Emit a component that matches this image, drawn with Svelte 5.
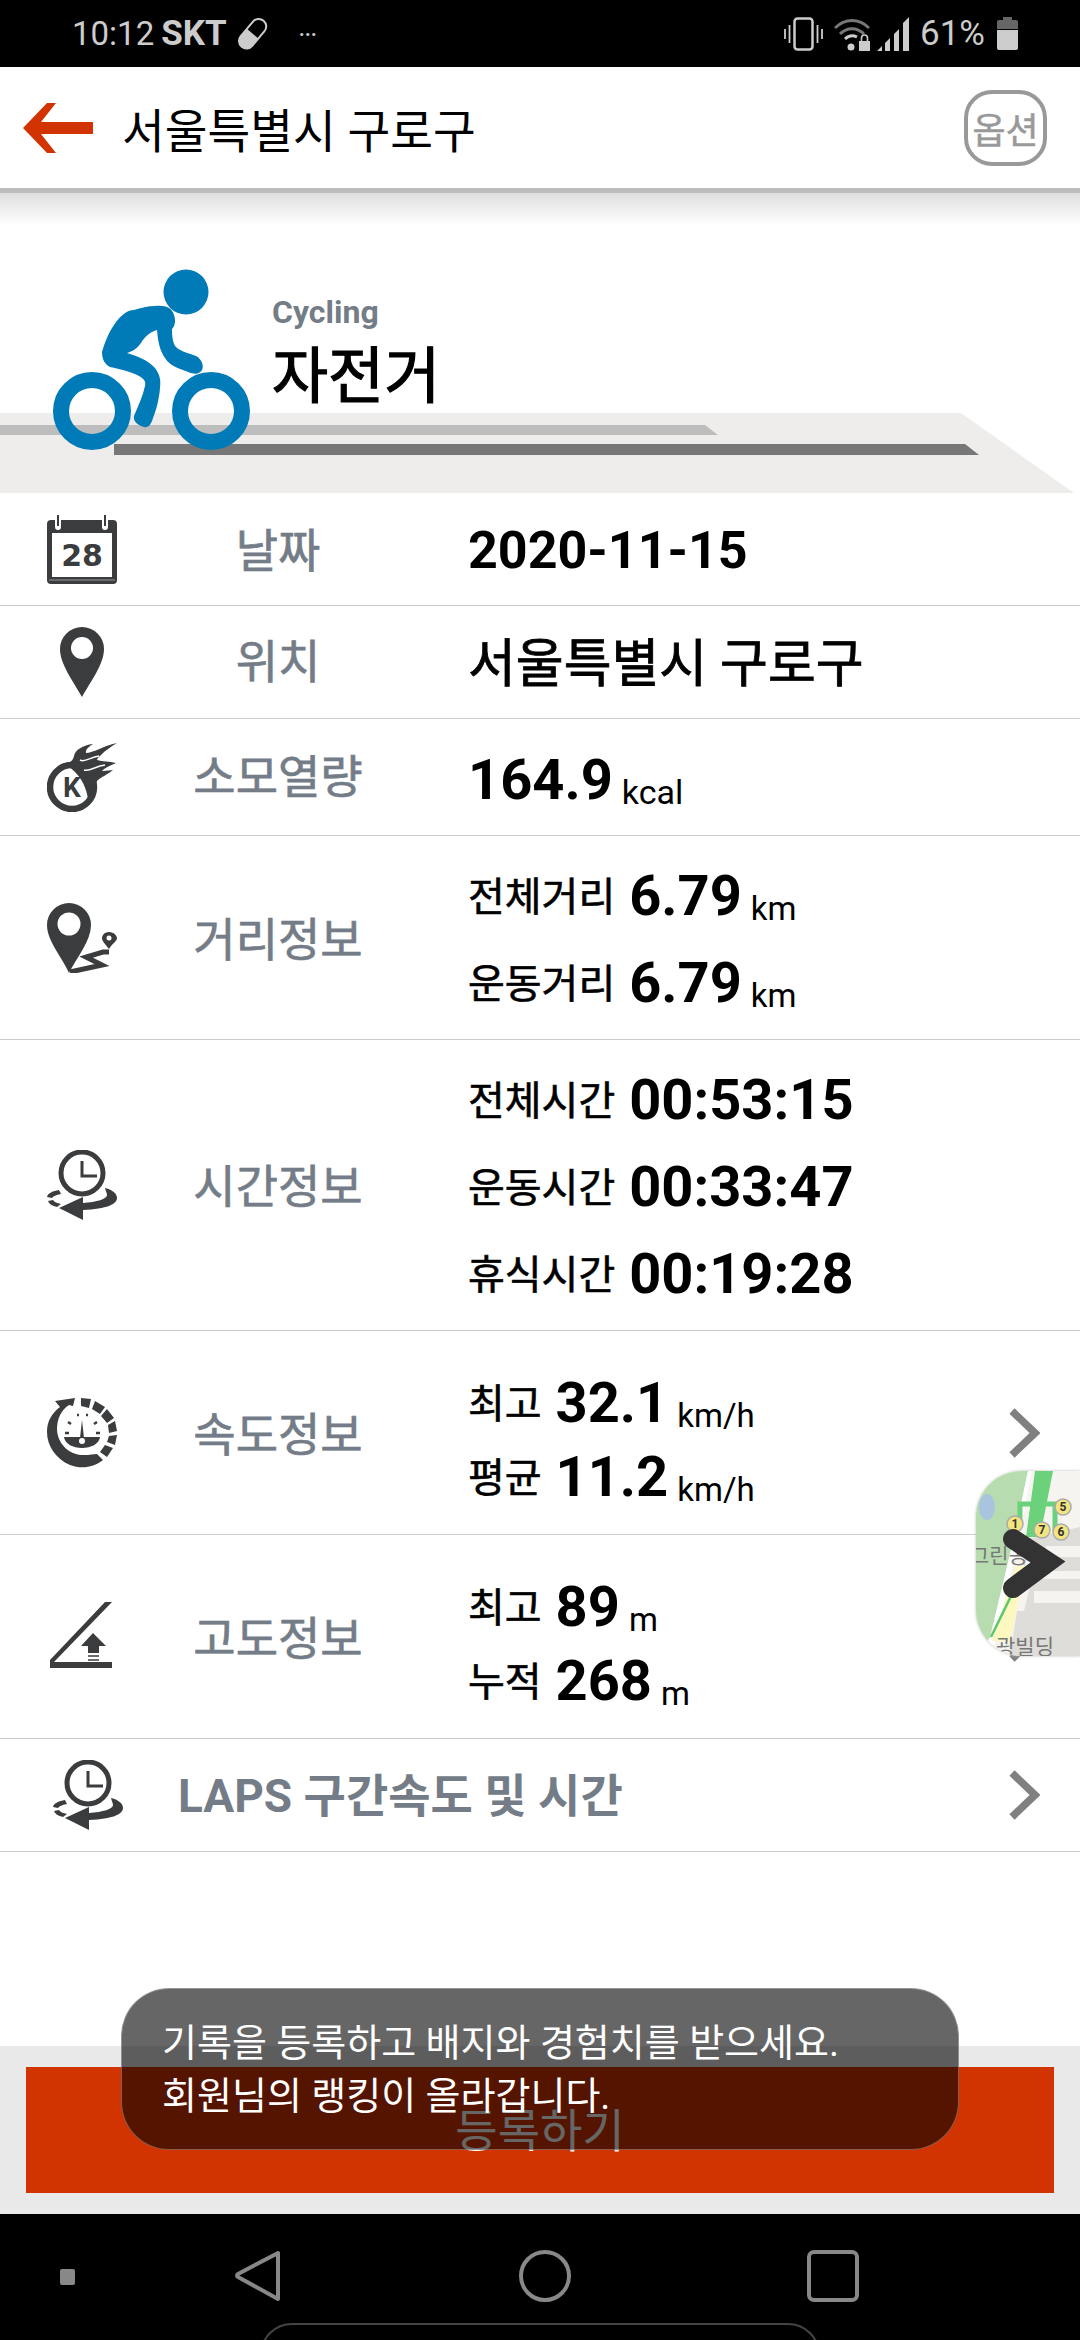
<script>
    const detailRows = [
        {
            label: '거리정보', icon: 'distance', cls: 'h203 gap87',
            lines: [
                { name: '전체거리', value: '6.79', unit: 'km' },
                { name: '운동거리', value: '6.79', unit: 'km' }
            ]
        },
        {
            label: '시간정보', icon: 'time', cls: 'h290 gap87',
            lines: [
                { name: '전체시간', value: '00:53:15' },
                { name: '운동시간', value: '00:33:47' },
                { name: '휴식시간', value: '00:19:28' }
            ]
        },
        {
            label: '속도정보', icon: 'speed', cls: 'h203 gap74', more: true,
            lines: [
                { name: '최고', value: '32.1', unit: 'km/h' },
                { name: '평균', value: '11.2', unit: 'km/h' }
            ]
        },
        {
            label: '고도정보', icon: 'height', cls: 'h203 gap74', more: true,
            lines: [
                { name: '최고', value: '89', unit: 'm' },
                { name: '누적', value: '268', unit: 'm' }
            ]
        }
    ];
</script>

{#snippet clock()}
    <svg class="icon" viewBox="0 0 70 70">
        <circle cx="35" cy="23" r="21" fill="none" stroke="#3a3c3e" stroke-width="5" />
        <path d="M35 11V26H50" fill="none" stroke="#3a3c3e" stroke-width="3" />
        <path d="M58 38C66 40 70 44 70 48C70 54 60 59 36 60L36 70L12 58L36 47V53C50 52 60 49 60 45C60 43 59 42 58 38Z" fill="#3a3c3e" />
        <path d="M0 47C1 43 6 41 12 40L14 44C9 45 6 46 5 48ZM1 51L6 50C7 52 10 53 14 54L10 57C5 56 2 54 1 51Z" fill="#3a3c3e" />
    </svg>
{/snippet}

{#snippet chevron()}
    <svg class="chevron" viewBox="0 0 34 50">
        <path d="M6 3L29 25L6 47" fill="none" stroke="#808080" stroke-width="7.500" />
    </svg>
{/snippet}

<div class="screen">
    <div class="statusbar">
        <div class="status-left">
            <span class="time">10:12</span>
            <b class="carrier">SKT</b>
            <svg class="pill" viewBox="0 0 34 34">
                <g transform="rotate(40 17 17)">
                    <rect x="9" y="0" width="15" height="34" rx="7.5" fill="none" stroke="#ccc" stroke-width="2" />
                    <path d="M9 17H24V26.5A7.5 7.5 0 0 1 9 26.5Z" fill="#ccc" />
                </g>
            </svg>
            <span class="dots">···</span>
        </div>
        <div class="status-right">
            <svg class="s-vibrate" viewBox="0 0 39 34">
                <rect x="10.500" y="1.500" width="18" height="31" rx="3" fill="none" stroke="#ccc" stroke-width="2.500" />
                <path d="M5.500 8V26M1 12V22M33.500 8V26M38 12V22" stroke="#ccc" stroke-width="1.800" />
            </svg>
            <svg class="s-wifi" viewBox="0 0 38 34">
                <path d="M2 11C12 1 26 1 36 11M7 17C14 10 24 10 31 17" fill="none" stroke="#777" stroke-width="3" />
                <path d="M12 22C16 18 20 18 24 20" fill="none" stroke="#ccc" stroke-width="3" />
                <circle cx="18" cy="30" r="3.500" fill="#ccc" />
                <rect x="26" y="24" width="11" height="10" fill="#ccc" />
                <path d="M28.500 24V21A3 3 0 0 1 34.500 21V24" fill="none" stroke="#ccc" stroke-width="1.600" />
            </svg>
            <svg class="s-signal" viewBox="0 0 34 34">
                <path d="M0 34L5 29V34ZM8 34V26L13 21V34ZM17 34V17L22 12V34ZM26 34V6L32 0V34Z" fill="#ccc" />
            </svg>
            <span class="battery-text">61%</span>
            <svg class="battery" viewBox="0 0 21 33">
                <path d="M6 0H15V3H19Q21 3 21 5V12H0V5Q0 3 2 3H6Z" fill="#666" />
                <path d="M0 13H21V31Q21 33 19 33H2Q0 33 0 31Z" fill="#ccc" />
            </svg>
        </div>
    </div>

    <header class="topbar">
        <svg class="back" viewBox="0 0 70 50">
            <path d="M24 0L33 0L18 19H70V31H18L33 50H24L0 25Z" fill="#d13400" />
        </svg>
        <h1>서울특별시 구로구</h1>
        <div class="options">옵션</div>
    </header>
    <div class="shadow"></div>

    <section class="hero">
        <svg class="road" viewBox="0 0 1080 80">
            <path d="M0 0H961L1074 80H0Z" fill="#eeedec" />
            <path d="M0 12H705L718 22H0Z" fill="#bdbdbd" />
            <path d="M114 31H965L979 42H114Z" fill="#777" />
        </svg>
        <svg class="rider" viewBox="0 0 220 190">
            <g transform="translate(-49 -265)" fill="#007bb8">
                <ellipse cx="186" cy="290" rx="22.500" ry="22.500" />
                <path d="M155 304C166 303 172 306 174 313C176 319 175 324 172 327C172 335 173 342 176 345C181 350 189 351 196 354C202 357 204 364 202 368C199 373 194 372 188 370C178 366 170 364 165 356C160 349 158 340 157 328C149 330 144 336 141 341C137 347 131 350 127 351C137 354 148 358 155 366C160 373 161 378 160 386C159 398 156 409 153 416C151 423 148 426 144 425C138 423 133 420 134 414C138 404 143 394 145 384C146 379 144 377 139 374C132 370 120 367 110 365C104 362 102 356 102 350C105 340 108 332 114 323C120 314 127 308 134 308C141 306 148 304 155 304Z" />
                <circle cx="92" cy="409" r="31" fill="none" stroke="#007bb8" stroke-width="16" />
                <circle cx="211" cy="409" r="31" fill="none" stroke="#007bb8" stroke-width="16" />
            </g>
        </svg>
        <div class="hero-text">
            <div class="sport-en">Cycling</div>
            <div class="sport-ko">자전거</div>
        </div>
    </section>

    <div class="list">
        <div class="row h112">
            <svg class="icon" viewBox="0 0 70 70">
                <rect x="0" y="6" width="70" height="64" rx="4" fill="#3a3c3e" />
                <rect x="5" y="19" width="60" height="44" fill="#fff" />
                <path d="M11 0V13M58 0V13" stroke="#fff" stroke-width="6" stroke-linecap="round" />
                <path d="M11 1V12M58 1V12" stroke="#3a3c3e" stroke-width="2" />
                <path d="M2 66H68" stroke="#999" stroke-width="1" />
                <text class="cal-day" x="35" y="52" text-anchor="middle">28</text>
            </svg>
            <div class="label">날짜</div>
            <div class="value-main date">2020-11-15</div>
        </div>
        <div class="row h112">
            <svg class="icon" viewBox="0 0 70 70">
                <path d="M35 70C26 54 13 37 13 22A22 22 0 0 1 57 22C57 37 44 54 35 70Z" fill="#3a3c3e" />
                <circle cx="35" cy="21" r="11" fill="#fff" />
            </svg>
            <div class="label up">위치</div>
            <div class="value-main place">서울특별시 구로구</div>
        </div>
        <div class="row h116">
            <svg class="icon" viewBox="0 0 70 70">
                <circle cx="25" cy="45" r="22" fill="none" stroke="#3a3c3e" stroke-width="6.500" />
                <text class="kcal-k" x="25" y="55" text-anchor="middle">K</text>
                <path d="M16 21C22 22 26 19 27 14C28 8 36 3 46 2C41 5 38 8 39 11C46 11 56 4 70 1C63 5 58 9 55 12C52 15 50 16 50 18C56 20 62 19 69 21C63 24 57 26 55 29C60 29 64 28 66 28C60 33 54 35 50 39C48 43 46 44 44 43C46 48 44 54 41 58C40 46 34 36 28 30C24 26 20 23 16 21Z" fill="#3a3c3e" />
                <path d="M33 18C38 21 43 15 52 14M37 28C43 30 48 24 58 23" fill="none" stroke="#fff" stroke-width="1.500" />
            </svg>
            <div class="label up">소모열량</div>
            <div class="line kcal-line">
                <span class="num">164.9</span>
                <span class="unit kcal">kcal</span>
            </div>
        </div>

        {#each detailRows as row}
            <div class="row {row.cls}">
                {#if row.icon === 'distance'}
                    <svg class="icon" viewBox="0 0 70 70">
                        <path d="M22 70C15 54 0 38 0 22A22 22 0 0 1 44 22C44 38 30 54 22 70Z" fill="#3a3c3e" />
                        <circle cx="22" cy="21" r="11.500" fill="#fff" />
                        <path d="M62 29C57 29 55 33 55 35C55 38 58 41 62 46C65 41 70 38 70 35C70 33 67 29 62 29Z" fill="#3a3c3e" />
                        <circle cx="62" cy="35" r="2.500" fill="#fff" />
                        <path d="M23 69L55 62L39 54L56 49H62" fill="none" stroke="#3a3c3e" stroke-width="5" />
                    </svg>
                {:else if row.icon === 'time'}
                    {@render clock()}
                {:else if row.icon === 'speed'}
                    <svg class="icon" viewBox="0 0 70 70">
                        <path d="M8 3L28 0L26 8L22 7C14 12 10 21 10 31C10 40 15 50 26 55C36 59 45 56 50 56L56 62C46 70 34 71 23 67C9 61 0 48 0 34C0 23 5 15 13 9Z" fill="#3a3c3e" />
                        <path d="M34 0L44 1L42 10L34 8ZM48 3L58 9L53 16L45 11ZM60 11L67 20L60 25L54 18ZM68 23L70 33L62 35L61 27ZM70 37L68 47L60 44L62 38ZM66 50L60 59L53 54L58 47Z" fill="#3a3c3e" />
                        <path d="M17 39H53C52 46 44 50 35 50C26 50 18 46 17 39Z" fill="#3a3c3e" />
                        <path d="M35 22L37 40H33Z" fill="#3a3c3e" />
                        <circle cx="35" cy="43" r="3" fill="#fff" />
                        <path d="M18 35H22M49 35H53M21 24L24 26M47 26L50 24M30 17H32M39 17H41" stroke="#3a3c3e" stroke-width="2.500" />
                    </svg>
                {:else}
                    <svg class="icon" viewBox="0 0 70 70">
                        <path d="M65 0L7 60H65V66H3V58L58 0Z" fill="#3a3c3e" />
                        <path d="M46 31L59 44H52V51H41V44H34Z" fill="#3a3c3e" />
                        <path d="M41 54H52M41 58H52" stroke="#3a3c3e" stroke-width="1.500" />
                    </svg>
                {/if}
                <div class="label">{row.label}</div>
                <div class="lines">
                    {#each row.lines as line}
                        <div class="line">
                            <span class="name">{line.name}</span>
                            <span class="num">{line.value}</span>
                            {#if line.unit}<span class="unit">{line.unit}</span>{/if}
                        </div>
                    {/each}
                </div>
                {#if row.more}{@render chevron()}{/if}
            </div>
        {/each}

        <div class="row h112 laps">
            {@render clock()}
            <div class="laps-title">LAPS 구간속도 및 시간</div>
            {@render chevron()}
        </div>
    </div>

    <div class="spacer"></div>

    <div class="action">
        <button class="register">등록하기</button>
    </div>

    <nav class="navbar">
        <div class="nav-dot"></div>
        <svg class="nav-back" viewBox="0 0 46 52">
            <path d="M43 3V49L3 27Q1 26 3 24Z" fill="none" stroke="#888" stroke-width="4" stroke-linejoin="round" />
        </svg>
        <div class="nav-home"></div>
        <div class="nav-recent"></div>
        <div class="nav-handle"></div>
    </nav>

    <div class="map-tab">
        <svg class="map-art" viewBox="0 0 104 185">
            <path d="M0 0H52L39 62L14 166L0 185Z" fill="#b7dcb0" />
            <ellipse cx="11" cy="36" rx="8" ry="13" fill="#a9c4de" />
            <path d="M52 68L104 56V185H34Z" fill="#dfddd9" />
            <path d="M70 75H104V86H70ZM64 100H104V108H64ZM58 120H104V132H58ZM50 90H60L48 140H40Z" fill="#f5f4f1" />
            <path d="M52 0L39 62L10 185H16L44 62L56 0Z" fill="#fff" />
            <path d="M40 95H50L34 170H16Z" fill="#fdf7c0" />
            <path d="M36 123L15 166" stroke="#5cc86a" stroke-width="2.500" />
            <path d="M59 0H77L64 66H50Z" fill="#6bd17a" />
            <path d="M44 52V33H79V60" fill="none" stroke="#6bd17a" stroke-width="5" />
            <g class="stops">
                <circle cx="39" cy="53" r="8" />
                <circle cx="87" cy="36" r="8" />
                <circle cx="66" cy="59" r="8" />
                <circle cx="85" cy="61" r="8" />
            </g>
            <g class="stop-nums" text-anchor="middle">
                <text x="39" y="57">1</text>
                <text x="87" y="40">5</text>
                <text x="66" y="63">7</text>
                <text x="85" y="65">6</text>
            </g>
            <text class="map-label" x="-6" y="92">그린공</text>
            <text class="map-label" x="20" y="183">광빌딩</text>
            <path d="M37 68L72 91L37 117" fill="none" stroke="#333" stroke-width="20" stroke-linecap="round" />
        </svg>
    </div>

    <div class="toast">
        <p>기록을 등록하고 배지와 경험치를 받으세요.</p>
        <p>회원님의 랭킹이 올라갑니다.</p>
    </div>
</div>

<style>
    :global(body) {
        margin: 0;
        background: #fff;
    }
    .screen {
        position: relative;
        width: 1080px;
        height: 2340px;
        display: flex;
        flex-direction: column;
        overflow: hidden;
        font-family: Roboto, "Noto Sans CJK KR", sans-serif;
        color: #000;
    }
    .statusbar {
        height: 67px;
        flex: none;
        background: #000;
        color: #ccc;
        display: flex;
        justify-content: space-between;
        align-items: center;
        padding: 0 62px 0 72px;
        font-size: 33px;
    }
    .status-left, .status-right {
        display: flex;
        align-items: center;
    }
    .carrier {
        margin-left: 7px;
        font-size: 35px;
    }
    .pill {
        width: 34px;
        height: 34px;
        margin-left: 9px;
    }
    .dots {
        font-size: 20px;
        margin-left: 29px;
        font-weight: 700;
    }
    .s-vibrate {
        width: 39px;
        height: 34px;
    }
    .s-wifi {
        width: 38px;
        height: 34px;
        margin-left: 10px;
    }
    .s-signal {
        width: 34px;
        height: 34px;
        margin-left: 6px;
    }
    .battery-text {
        margin-left: 9px;
        font-size: 35px;
    }
    .battery {
        width: 21px;
        height: 33px;
        margin-left: 12px;
    }

    .topbar {
        height: 121px;
        flex: none;
        display: flex;
        align-items: center;
        padding: 0 33px 0 23px;
        background: #fff;
    }
    .back {
        width: 70px;
        height: 50px;
    }
    h1 {
        flex: 1;
        margin: 0 0 0 29px;
        font-size: 46.500px;
        font-weight: 400;
    }
    .options {
        width: 75px;
        height: 68px;
        border: 4px solid #999;
        border-radius: 28px;
        color: #999;
        font-size: 36px;
        -webkit-text-stroke: 0.5px #999;
        display: flex;
        align-items: center;
        justify-content: center;
        white-space: nowrap;
    }
    .shadow {
        height: 37px;
        flex: none;
        background: linear-gradient(#bcbcbc 0 5px, #dedede 5px, #fff 100%);
    }

    .hero {
        position: relative;
        height: 268px;
        flex: none;
        display: flex;
        padding-left: 272px;
    }
    .road {
        position: absolute;
        left: 0;
        bottom: 0;
        width: 1080px;
        height: 80px;
    }
    .rider {
        position: absolute;
        left: 49px;
        top: 42px;
        width: 220px;
        height: 190px;
    }
    .hero-text {
        position: relative;
        padding-top: 68px;
    }
    .sport-en {
        color: #747d87;
        font-size: 32px;
        font-weight: 700;
        line-height: 38px;
    }
    .sport-ko {
        font-size: 61px;
        -webkit-text-stroke: 1.2px #000;
        line-height: 76px;
        margin-top: 8px;
    }

    .list {
        flex: none;
    }
    .row {
        display: flex;
        align-items: center;
        padding-left: 47px;
        border-bottom: 1px solid #ccc;
        box-sizing: border-box;
    }
    .h112 { height: 113px; }
    .h116 { height: 117px; }
    .h203 { height: 204px; }
    .h290 { height: 291px; }
    .icon {
        width: 70px;
        height: 70px;
        flex: none;
    }
    .label {
        width: 322px;
        flex: none;
        margin-right: 29px;
        margin-bottom: 4px;
        text-align: center;
        font-size: 46px;
        -webkit-text-stroke: 0.7px #747d87;
        color: #747d87;
    }
    .label.up {
        margin-bottom: 8px;
    }
    .value-main {
        font-weight: 700;
    }
    .date {
        font-size: 52px;
        margin-top: 2px;
    }
    .place {
        font-size: 52px;
        font-weight: 400;
        -webkit-text-stroke: 0.8px #000;
        margin-bottom: 5px;
    }
    .lines {
        flex: 1;
        display: flex;
        flex-direction: column;
        margin-top: 5px;
    }
    .gap74 .lines {
        margin-top: 15px;
    }
    .gap87 .line { height: 87px; }
    .gap74 .line { height: 74px; }
    .line {
        display: flex;
        align-items: baseline;
    }
    .lines .line {
        line-height: 87px;
    }
    .gap74 .lines .line {
        line-height: 74px;
    }
    .kcal-line {
        margin-top: 5px;
    }
    .name {
        font-size: 40px;
        -webkit-text-stroke: 0.6px #000;
        margin-right: 14px;
        transform: translateY(-4px);
    }
    .num {
        font-size: 56px;
        font-weight: 700;
    }
    .unit {
        font-size: 33px;
        margin-left: 9px;
        transform: translateY(5px);
    }
    .kcal {
        font-size: 34px;
    }
    .chevron {
        position: absolute;
        left: 1006px;
        width: 34px;
        height: 50px;
    }
    .laps-title {
        margin-left: 55px;
        margin-bottom: 6px;
        font-size: 46px;
        font-weight: 700;
        color: #747d87;
    }
    .laps {
        padding-left: 53px;
    }
    .cal-day {
        font: 700 30px "DejaVu Sans", sans-serif;
        fill: #3a3c3e;
    }
    .kcal-k {
        font: 700 28px Roboto, sans-serif;
        fill: #3a3c3e;
    }

    .spacer {
        flex: 1;
    }
    .action {
        height: 168px;
        flex: none;
        box-sizing: border-box;
        background: #e9e9e9;
        padding: 21px 26px;
    }
    .register {
        width: 100%;
        height: 126px;
        border: none;
        padding: 0 0 6px;
        background: #d13400;
        color: #fff;
        font-family: inherit;
        font-size: 46px;
    }

    .navbar {
        position: relative;
        height: 126px;
        flex: none;
        background: #000;
    }
    .nav-dot {
        position: absolute;
        left: 60px;
        top: 55px;
        width: 15px;
        height: 16px;
        border-radius: 2px;
        background: #888;
    }
    .nav-back {
        position: absolute;
        left: 235px;
        top: 36px;
        width: 46px;
        height: 52px;
    }
    .nav-home {
        position: absolute;
        left: 519px;
        top: 36px;
        width: 44px;
        height: 44px;
        border: 4px solid #888;
        border-radius: 50%;
    }
    .nav-recent {
        position: absolute;
        left: 807px;
        top: 36px;
        width: 44px;
        height: 44px;
        border: 4px solid #888;
        border-radius: 7px;
    }
    .nav-handle {
        position: absolute;
        left: 260px;
        top: 109px;
        width: 556px;
        height: 60px;
        border: 2px solid #444;
        border-radius: 44px;
    }

    .map-tab {
        position: absolute;
        left: 976px;
        top: 1471px;
        width: 104px;
        height: 185px;
        overflow: hidden;
        border-radius: 46px 0 0 46px;
        background: #f5f4f0;
        box-shadow: 0 0 3px #bbb;
    }
    .map-art {
        display: block;
        width: 104px;
        height: 185px;
    }
    .stops circle {
        fill: #f2e57f;
        stroke: #aaa;
        stroke-width: 1.500;
    }
    .stop-nums text {
        font: 700 12px Roboto, sans-serif;
        fill: #333;
    }
    .map-label {
        font-size: 21px;
        fill: #777;
    }

    .toast {
        position: absolute;
        left: 121px;
        top: 1988px;
        width: 838px;
        height: 162px;
        box-sizing: border-box;
        padding: 28px 0 0 40px;
        background: rgba(0, 0, 0, 0.6);
        border: 1px solid rgba(255, 255, 255, 0.3);
        border-radius: 48px;
        color: #fff;
        font-size: 38px;
        line-height: 53px;
    }
    .toast p {
        margin: 0;
    }
</style>
